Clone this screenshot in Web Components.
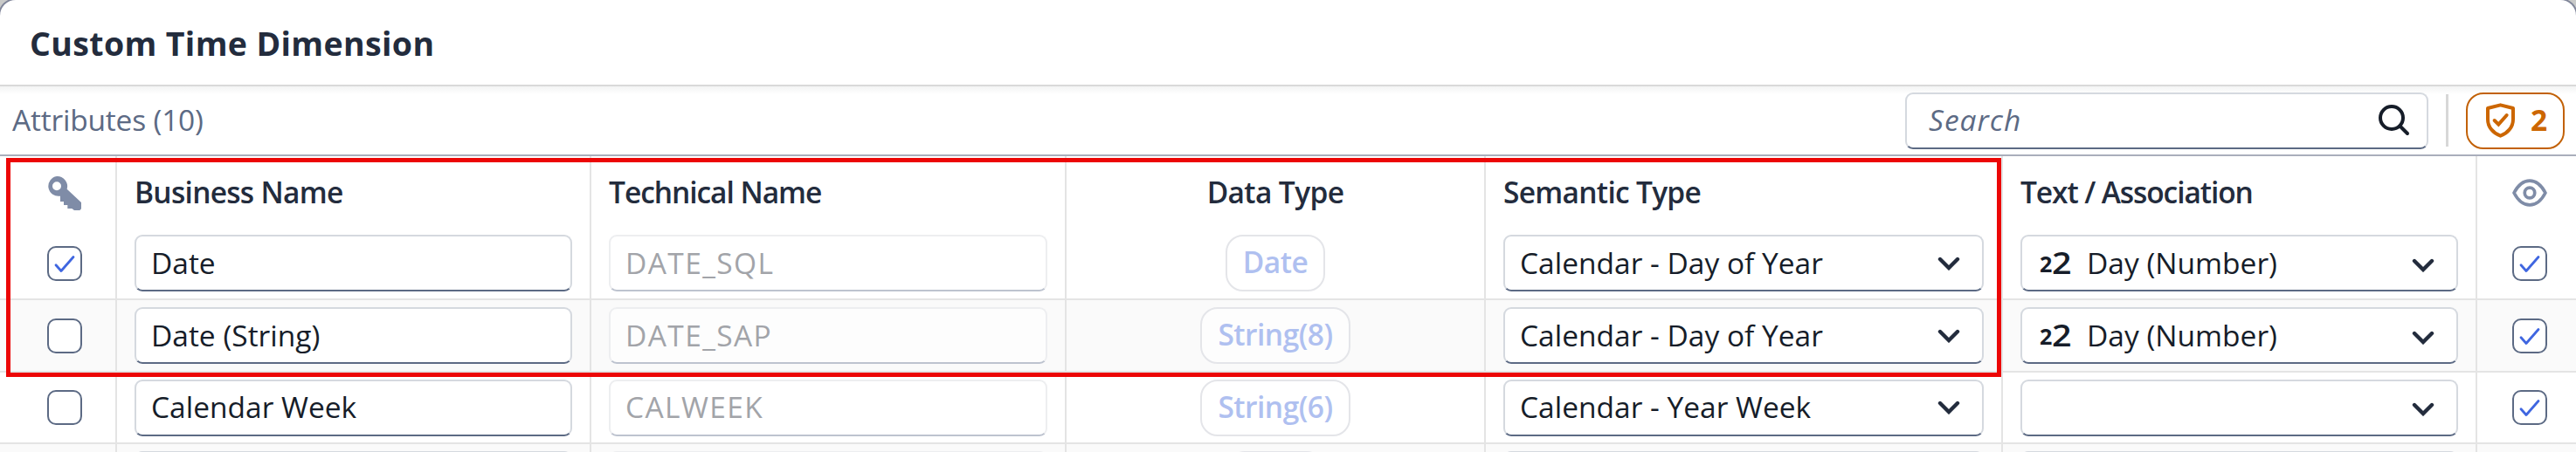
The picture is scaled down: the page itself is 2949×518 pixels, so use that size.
<!DOCTYPE html>
<html lang="en">
<head>
<meta charset="utf-8">
<title>Custom Time Dimension</title>
<style>
  body {
    margin: 0;
    height: 518px;
    overflow: hidden;
    background: #c9cac9;
    font-family: "Open Sans", "Noto Sans", sans-serif;
    font-size: 33.5px;
    line-height: 1.362;
    color: #161d29;
  }
</style>
</head>
<body>
<time-dialog heading="Custom Time Dimension">
  <attribute-toolbar slot="toolbar" label="Attributes (10)" warnings="2"></attribute-toolbar>
  <attribute-table></attribute-table>
</time-dialog>

<script>
class TimeDialog extends HTMLElement {
  constructor() {
    super();
    this.attachShadow({ mode: 'open' });
  }

  connectedCallback() {
    this.shadowRoot.innerHTML = `
      <style>
        :host {
          display: flex;
          flex-direction: column;
          height: 518px;
          background: #fff;
          border-radius: 18px 18px 0 0;
          box-shadow: 0 0 0 2px #80869a;
          overflow: hidden;
        }
        header {
          box-sizing: border-box;
          flex: none;
          height: 99px;
          padding: 2px 0 0 34px;
          border-bottom: 2px solid #d9d9d9;
          display: flex;
          align-items: center;
        }
        h1 {
          margin: 0;
          font-size: 37.5px;
          font-weight: 700;
          letter-spacing: 0.36px;
          color: #232c3d;
          white-space: nowrap;
        }
      </style>
      <header><h1>${this.getAttribute('heading')}</h1></header>
      <slot name="toolbar"></slot>
      <slot></slot>
    `;
  }
}

class AttributeToolbar extends HTMLElement {
  constructor() {
    super();
    this.attachShadow({ mode: 'open' });
  }

  connectedCallback() {
    this.shadowRoot.innerHTML = `
      <style>
        :host {
          box-sizing: border-box;
          flex: none;
          height: 80px;
          padding: 0 13px 0 14px;
          display: flex;
          align-items: center;
          border-bottom: 2px solid #a9aebc;
          background: linear-gradient(#f3f4f4, #fff 9px);
        }
        .label {
          flex: 1;
          color: #5c6a84;
          letter-spacing: -0.2px;
        }
        .divider {
          width: 3px;
          height: 60px;
          margin: 0 20px;
          background: #d7d7d7;
        }
      </style>
      <span class="label">${this.getAttribute('label')}</span>
      <search-field placeholder="Search"></search-field>
      <span class="divider"></span>
      <warning-button>${this.getAttribute('warnings')}</warning-button>
    `;
  }
}

class SearchField extends HTMLElement {
  constructor() {
    super();
    this.attachShadow({ mode: 'open' });
  }

  connectedCallback() {
    this.shadowRoot.innerHTML = `
      <style>
        :host {
          box-sizing: border-box;
          width: 599px;
          height: 65px;
          padding: 0 19px 0 25px;
          display: flex;
          align-items: center;
          justify-content: space-between;
          border: 2px solid #d5d9df;
          border-bottom: 2px solid #5c6a84;
          border-radius: 9px;
          background: #fff;
        }
        span {
          font-style: italic;
          letter-spacing: 1px;
          color: #5c6a84;
          padding-bottom: 1px;
        }
      </style>
      <span>${this.getAttribute('placeholder')}</span>
      <svg width="36" height="36" viewBox="0 0 36 36" fill="none" stroke="#161d29" stroke-width="4" stroke-linecap="round">
        <circle cx="15" cy="15" r="13"/>
        <path d="M24.5 24.5L33 33"/>
      </svg>
    `;
  }
}

class WarningButton extends HTMLElement {
  constructor() {
    super();
    this.attachShadow({ mode: 'open' });
  }

  connectedCallback() {
    this.shadowRoot.innerHTML = `
      <style>
        :host {
          box-sizing: border-box;
          width: 113px;
          height: 65px;
          padding-left: 21px;
          display: flex;
          align-items: center;
          gap: 18px;
          border: 2px solid #c26107;
          border-radius: 20px;
          background: #fff;
          color: #cc6600;
          font-weight: 700;
        }
      </style>
      <svg width="33" height="40" viewBox="0 0 99 120" fill="none" stroke="currentColor" stroke-width="12">
        <path d="M49.5 7L93 18V56C93 82 75 104 49.5 113C24 104 6 82 6 56V18Z" stroke-linejoin="round"/>
        <path d="M29 60L43 74L71 42" stroke-linecap="round"/>
      </svg>
      <span><slot></slot></span>
    `;
  }
}

class TextField extends HTMLElement {
  constructor() {
    super();
    this.attachShadow({ mode: 'open' });
  }

  connectedCallback() {
    this.shadowRoot.innerHTML = `
      <style>
        :host {
          box-sizing: border-box;
          height: 65px;
          padding: 0 17px;
          display: flex;
          align-items: center;
          border: 2px solid #d5d9df;
          border-bottom-color: #5c6a84;
          border-radius: 9px;
          background: #fff;
          white-space: nowrap;
        }
        :host([disabled]) {
          border-color: #edeef0;
          border-bottom-color: #bdc3cf;
          background: rgba(255, 255, 255, 0.5);
          color: #a2a4a9;
        }
      </style>
      <slot></slot>
    `;
  }
}

class SelectField extends HTMLElement {
  constructor() {
    super();
    this.attachShadow({ mode: 'open' });
  }

  connectedCallback() {
    const numeric = this.hasAttribute('numeric');
    this.shadowRoot.innerHTML = `
      <style>
        :host {
          box-sizing: border-box;
          height: 65px;
          padding: 0 25px 0 17px;
          display: flex;
          align-items: center;
          border: 2px solid #d5d9df;
          border-bottom-color: #5c6a84;
          border-radius: 9px;
          background: #fff;
          white-space: nowrap;
        }
        .value {
          flex: 1;
        }
        .digits {
          width: 41px;
          margin: 0 13px 0 3px;
          display: flex;
          align-items: baseline;
        }
        .small, .large {
          display: inline-block;
          transform-origin: left;
        }
        .small {
          width: 14px;
          font-size: 25px;
          font-weight: 700;
          transform: translateY(-2px);
        }
        .large {
          font-weight: 600;
          transform: scaleX(1.18);
        }
        svg {
          margin-top: var(--chevron-drop, 0);
        }
      </style>
      ${numeric ? '<span class="digits"><span class="small">2</span><span class="large">2</span></span>' : ''}
      <span class="value"><slot></slot></span>
      <svg width="26" height="16" viewBox="0 0 26 16" fill="none" stroke="#232c3d" stroke-width="4.4" stroke-linecap="round">
        <path d="M3 3L13 13L23 3"/>
      </svg>
    `;
  }
}

class TypeBadge extends HTMLElement {
  constructor() {
    super();
    this.attachShadow({ mode: 'open' });
  }

  connectedCallback() {
    this.shadowRoot.innerHTML = `
      <style>
        :host {
          box-sizing: border-box;
          height: 65px;
          padding: 0 18px 1px;
          display: flex;
          align-items: center;
          justify-content: center;
          border: 2px solid #e4e5e9;
          border-radius: 20px;
          background: rgba(255, 255, 255, 0.5);
          color: #afc0f0;
          font-weight: 600;
          letter-spacing: -0.5px;
        }
      </style>
      <slot></slot>
    `;
  }
}

class CheckBox extends HTMLElement {
  constructor() {
    super();
    this.attachShadow({ mode: 'open' });
  }

  connectedCallback() {
    this.shadowRoot.innerHTML = `
      <style>
        :host {
          box-sizing: border-box;
          display: block;
          width: 40px;
          height: 40px;
          border: 2px solid #5c6a84;
          border-radius: 10px;
          background: #fff;
        }
        svg {
          display: block;
        }
      </style>
      ${this.hasAttribute('checked') ? `
      <svg width="36" height="36" viewBox="2 2 36 36" fill="none" stroke="#3f66e0" stroke-width="2.8" stroke-linecap="round" stroke-linejoin="round">
        <path d="M10 21.8L16 28.5L30 12.5"/>
      </svg>` : ''}
    `;
  }
}

const attributes = [
  { key: true, name: 'Date', tech: 'DATE_SQL', type: 'Date', semantic: 'Calendar - Day of Year', text: 'Day (Number)' },
  { key: false, name: 'Date (String)', tech: 'DATE_SAP', type: 'String(8)', semantic: 'Calendar - Day of Year', text: 'Day (Number)' },
  { key: false, name: 'Calendar Week', tech: 'CALWEEK', type: 'String(6)', semantic: 'Calendar - Year Week', text: '' },
  { key: false, name: '', tech: '', type: '', semantic: '', text: '' }
];

class AttributeTable extends HTMLElement {
  constructor() {
    super();
    this.attachShadow({ mode: 'open' });
  }

  connectedCallback() {
    this.shadowRoot.innerHTML = `
      <style>
        :host {
          display: block;
          position: relative;
        }
        .row {
          display: grid;
          grid-template-columns: 134px 543px 544px 480px 592px 543px 1fr;
          height: 83px;
        }
        .row.striped {
          background: #fafafa;
        }
        .row.short {
          height: 82px;
        }
        .row.head {
          height: 82px;
          color: #232c3d;
          font-weight: 600;
        }
        .cell {
          box-sizing: border-box;
          padding: 0 20px;
          display: flex;
          align-items: center;
          border-right: 2px solid #e4e4e4;
          border-bottom: 2px solid #e4e4e4;
          white-space: nowrap;
        }
        .cell:last-child {
          border-right: 0;
        }
        .head .cell {
          padding-top: 2px;
          border-bottom: 0;
        }
        .cell.key {
          padding-left: 54px;
        }
        .cell.eye {
          padding-left: 40px;
        }
        .center {
          justify-content: center;
        }
        text-field, select-field {
          flex: 1;
        }
        .tech {
          letter-spacing: 1.4px;
        }
        .type type-badge {
          min-width: 111px;
        }
        .assoc {
          --chevron-drop: 4px;
        }
        .marker {
          position: absolute;
          box-sizing: border-box;
          left: 7px;
          top: 2px;
          width: 2284px;
          height: 251px;
          border: 5px solid #ec0606;
        }
      </style>
      <div class="row head">
        <div class="cell key">
          <svg width="40" height="39" viewBox="0 0 120 117" fill="#7f8ca7" style="margin-left:-1px">
            <path fill-rule="evenodd" d="M36 0A35 34.5 0 0 1 71 44L120 90V112L115 117H96L88 111H73V99H60V87H48V68A35 34.5 0 1 1 36 0ZM36 19A15 15 0 1 0 36 49A15 15 0 1 0 36 19Z"/>
          </svg>
        </div>
        <div class="cell" style="letter-spacing:-.72px">Business Name</div>
        <div class="cell" style="letter-spacing:-1.04px">Technical Name</div>
        <div class="cell center" style="letter-spacing:-.63px">Data Type</div>
        <div class="cell" style="letter-spacing:-.71px">Semantic Type</div>
        <div class="cell" style="letter-spacing:-1.09px">Text / Association</div>
        <div class="cell eye">
          <svg width="40" height="32" viewBox="0 0 118 94" fill="none" stroke="#7f8ca7" stroke-width="11" stroke-linejoin="round">
            <path d="M6 47C18 24 36 6 59 6S100 24 112 47C100 70 82 88 59 88S18 70 6 47Z"/>
            <circle cx="59" cy="47" r="17"/>
          </svg>
        </div>
      </div>
      ${attributes.map((item, i) => `
        <div class="row ${i % 2 ? 'striped' : ''} ${i === 2 ? 'short' : ''}">
          <div class="cell key"><check-box ${item.key ? 'checked' : ''}></check-box></div>
          <div class="cell"><text-field>${item.name}</text-field></div>
          <div class="cell tech"><text-field disabled>${item.tech}</text-field></div>
          <div class="cell type center"><type-badge>${item.type}</type-badge></div>
          <div class="cell"><select-field>${item.semantic}</select-field></div>
          <div class="cell assoc"><select-field ${item.text ? 'numeric' : ''}>${item.text}</select-field></div>
          <div class="cell eye"><check-box checked></check-box></div>
        </div>
      `).join('')}
      <div class="marker"></div>
    `;
  }
}

customElements.define('search-field', SearchField);
customElements.define('warning-button', WarningButton);
customElements.define('text-field', TextField);
customElements.define('select-field', SelectField);
customElements.define('type-badge', TypeBadge);
customElements.define('check-box', CheckBox);
customElements.define('attribute-toolbar', AttributeToolbar);
customElements.define('attribute-table', AttributeTable);
customElements.define('time-dialog', TimeDialog);
</script>
</body>
</html>
